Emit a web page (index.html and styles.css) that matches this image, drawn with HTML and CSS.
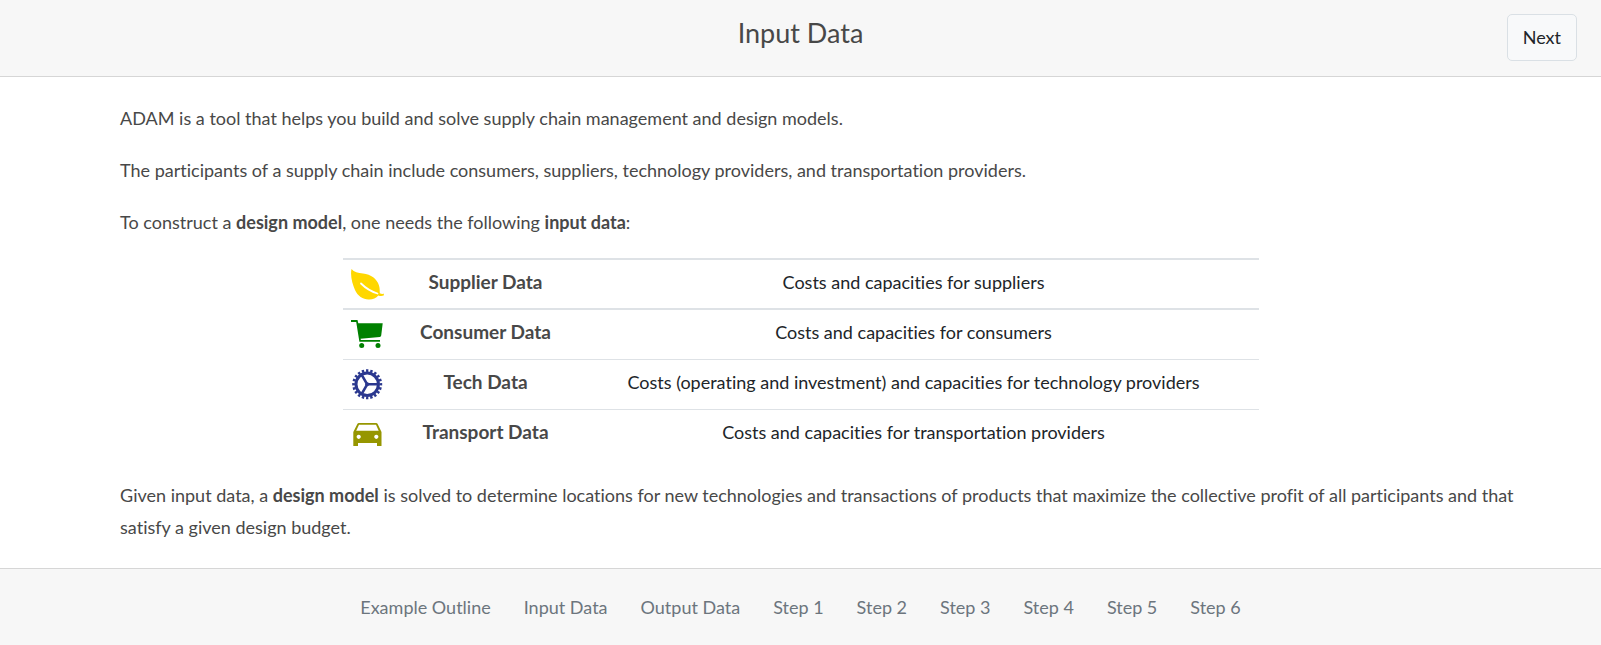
FILE: index.html
```html
<!DOCTYPE html>
<html lang="en">
<head>
<meta charset="utf-8">
<meta name="viewport" content="width=device-width, initial-scale=1">
<title>Input Data</title>
<link rel="stylesheet" href="styles.css">
</head>
<body>
<header class="topbar">
  <h1 class="title">Input Data</h1>
  <button type="button" class="next">Next</button>
</header>
<main class="content">
  <p>ADAM is a tool that helps you build and solve supply chain management and design models.</p>
  <p>The participants of a supply chain include consumers, suppliers, technology providers, and transportation providers.</p>
  <p>To construct a <strong>design model</strong>, one needs the following <strong>input data</strong>:</p>
  <table class="data">
    <colgroup><col class="col-icon"><col class="col-name"><col></colgroup>
    <thead>
      <tr>
        <td><svg class="icon leaf" viewBox="0 0 34 33" aria-hidden="true"><path fill="currentColor" d="M.5 1C3 4 7 5 12 5.6C20 6.5 26 11 28 17.500C29 20.500 28.600 23 28.800 25.200C30 26 31.500 26 33 25.800L32.700 27.600C31 28.300 29 28.200 27.300 27.500C25 30.500 21.500 31.800 17.500 31.600C12 31.200 6.500 28 4 22C1.500 16 -1 8 .5 1Z"/><path fill="none" stroke="#fff" stroke-width="1.800" stroke-linecap="round" d="M10 15.500C14.500 20 20 23.500 26.500 25.500"/></svg></td>
        <th scope="row">Supplier Data</th>
        <td>Costs and capacities for suppliers</td>
      </tr>
    </thead>
    <tbody>
      <tr>
        <td><svg class="icon cart" viewBox="0 -1 34 33" aria-hidden="true"><path fill="currentColor" d="M0 1H6.500L7.300 4.300H31.700L30.200 16.500Q30 17.800 28.800 18L9.500 19.700L9.900 21H29V22.800H8.400L5.200 3H0Z"/><circle fill="currentColor" cx="10.700" cy="26.500" r="2.500"/><circle fill="currentColor" cx="27" cy="26.500" r="2.500"/></svg></td>
        <th scope="row">Consumer Data</th>
        <td>Costs and capacities for consumers</td>
      </tr>
      <tr>
        <td><svg class="icon gear" viewBox="0 -1 34 33" aria-hidden="true"><g fill="none" stroke="currentColor"><circle cx="16.200" cy="15.300" r="11.200" stroke-width="3"/><circle cx="16.200" cy="15.300" r="13.600" stroke-width="2.800" pathLength="40" stroke-dasharray="1.100 .9" stroke-dashoffset=".55"/><path stroke-width="2.600" d="M16.200 15.300H27M16.200 15.300L11 6.300M16.200 15.300L11 24.300"/></g><circle fill="currentColor" cx="16.200" cy="15.300" r="2"/></svg></td>
        <th scope="row">Tech Data</th>
        <td>Costs (operating and investment) and capacities for technology providers</td>
      </tr>
      <tr>
        <td><svg class="icon car" viewBox="0 -1 34 33" aria-hidden="true"><path fill="currentColor" fill-rule="evenodd" d="M8 4H25Q26.300 4 26.800 5.200L30.500 13V27H26V24H7V27H2.300V13L6.200 5.200Q6.700 4 8 4ZM8 5.800L5.200 11.800H27.700L25 5.800ZM7.700 15.700a2.100 2.100 0 1 0 .01 0ZM25.300 15.700a2.100 2.100 0 1 0 .01 0Z"/></svg></td>
        <th scope="row">Transport Data</th>
        <td>Costs and capacities for transportation providers</td>
      </tr>
    </tbody>
  </table>
  <p class="summary">Given input data, a <strong>design model</strong> is solved to determine locations for new technologies and transactions of products that maximize the collective profit of all participants and that satisfy a given design budget.</p>
</main>
<footer class="footer">
  <nav class="steps" aria-label="Steps">
    <a href="#outline">Example Outline</a>
    <a href="#input">Input Data</a>
    <a href="#output">Output Data</a>
    <a href="#step1">Step 1</a>
    <a href="#step2">Step 2</a>
    <a href="#step3">Step 3</a>
    <a href="#step4">Step 4</a>
    <a href="#step5">Step 5</a>
    <a href="#step6">Step 6</a>
  </nav>
</footer>
</body>
</html>
```
FILE: styles.css
```css
* { box-sizing: border-box; }
body {
  margin: 0;
  min-height: 100vh;
  display: flex;
  flex-direction: column;
  background: #fff;
  color: #484848;
  font-family: Lato, "Open Sans", sans-serif;
  font-size: 18px;
  line-height: 32px;
  font-variant-ligatures: none;
}
.topbar {
  display: grid;
  grid-template-columns: 1fr auto 1fr;
  align-items: start;
  padding: 14px 24px 15px;
  background: #f7f7f7;
  border-bottom: 1px solid #d6d6d6;
}
.title {
  grid-column: 2;
  margin: 0;
  font-size: 27px;
  font-weight: 400;
  line-height: 38px;
}
.next {
  justify-self: end;
  padding: 6px 15px 7px;
  border: 1px solid #dae0e5;
  border-radius: 5px;
  background: #f8f9fa;
  color: #212529;
  font: inherit;
}
.content {
  flex: 1;
  width: 85%;
  margin: 0 auto;
  padding: 25px 0 24px;
}
.content p { margin: 0 0 20px; }
.content .summary { margin: 0 -40px 0 0; }
.data {
  width: 100%;
  max-width: 916px;
  margin: 0 auto 20px;
  border-collapse: separate;
  border-spacing: 0;
  table-layout: fixed;
  color: #212529;
  text-align: center;
}
.col-icon { width: 60px; }
.col-name { width: 166px; }
.data th, .data td {
  padding: 6px 8px;
  border-top: 1px solid #dee2e6;
  vertical-align: top;
}
.data td:first-child { padding: 8px; }
.data th { color: #484848; font-size: 19px; }
.data thead th, .data thead td,
.data tbody tr:first-child th, .data tbody tr:first-child td { border-top-width: 2px; }
.data thead td:first-child { padding-bottom: 7px; }
.icon { display: block; width: 34px; height: 33px; }
.leaf { color: #ffd700; }
.cart { color: #008000; }
.gear { color: #2b388f; }
.car { color: #969600; }
.footer {
  padding: 22px 24px;
  background: #f7f7f7;
  border-top: 1px solid #d6d6d6;
}
.steps {
  display: flex;
  flex-wrap: wrap;
  justify-content: center;
  gap: 8px 33px;
}
.steps a { color: #6c757d; text-decoration: none; }
```
